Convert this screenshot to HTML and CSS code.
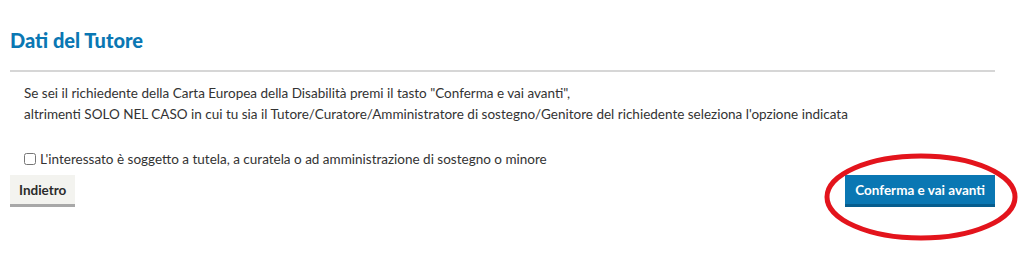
FILE: index.html
```html
<!DOCTYPE html>
<html lang="it">
<head>
    <meta charset="UTF-8">
    <title>Dati del Tutore</title>
    <link rel="stylesheet" href="styles.css">
</head>
<body>
    <div class="page">
        <h2 class="titolo">Dati del Tutore</h2>
        <hr class="separatore">
        <div class="testo">
            <p>Se sei il richiedente della Carta Europea della Disabilità premi il tasto "Conferma e vai avanti",<br>
            altrimenti SOLO NEL CASO in cui tu sia il Tutore/Curatore/Amministratore di sostegno/Genitore del richiedente seleziona l'opzione indicata</p>
            <label class="scelta"><input type="checkbox"> L'interessato è soggetto a tutela, a curatela o ad amministrazione di sostegno o minore</label>
        </div>
        <div class="azioni">
            <button type="button" class="btn btn-indietro">Indietro</button>
            <button type="button" class="btn btn-avanti">Conferma e vai avanti</button>
        </div>
        <svg class="cerchio" width="200" height="96" viewBox="0 0 200 96">
            <ellipse cx="100" cy="48" rx="94" ry="41" fill="none" stroke="#e3141c" stroke-width="5"/>
        </svg>
    </div>
</body>
</html>
```

FILE: styles.css
```css
body {
    margin: 0;
    min-height: 268px;
    background-color: #ffffff;
    font-family: Lato, "Open Sans", sans-serif;
    color: #333;
}

.page {
    position: relative;
    width: 985px;
    padding: 26px 0 50px 10px;
}

.titolo {
    margin: 0;
    font-size: 20px;
    font-weight: 900;
    color: #0a77b3;
    line-height: 28px;
}

.separatore {
    margin: 16px 0 0 0;
    border: none;
    border-top: 2px solid #d6d6d6;
}

.testo {
    padding: 11px 14px 0;
    font-size: 13.5px;
    color: #333;
}

.testo p {
    margin: 0;
    line-height: 21px;
}

.scelta {
    display: flex;
    align-items: center;
    gap: 4px;
    margin-top: 24px;
    line-height: 20px;
}

.scelta input {
    margin: 0;
    width: 12px;
    height: 12px;
}

.azioni {
    display: flex;
    justify-content: space-between;
    margin-top: 6px;
}

.btn {
    font-family: inherit;
    font-size: 13.5px;
    font-weight: bold;
    border: none;
    padding: 0 10px;
    height: 32px;
    cursor: pointer;
}

.btn-indietro {
    background-color: #f3f3ef;
    color: #2b2b2b;
    border-bottom: 3px solid #a8a8a8;
    padding: 0 9px;
}

.btn-avanti {
    background-color: #0a77b3;
    color: #ffffff;
    border-bottom: 3px solid #065d8e;
}

.cerchio {
    position: absolute;
    left: 821px;
    top: 149px;
    display: block;
    overflow: visible;
}
```
